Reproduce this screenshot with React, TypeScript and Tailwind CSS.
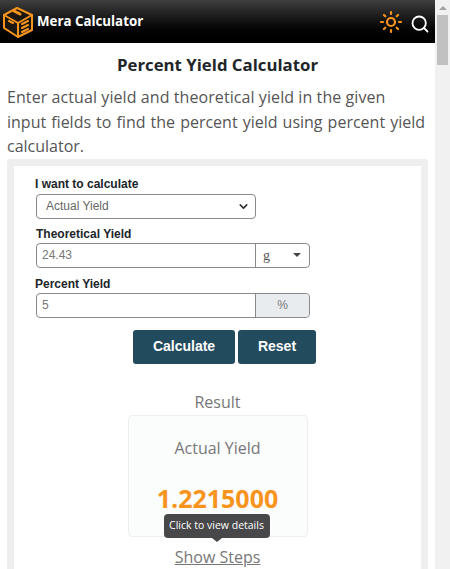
import { ChevronDown, Search, Sun } from "lucide-react"

function Logo() {
    return (
        <svg width="30" height="33" viewBox="3 5 30 33" fill="none" stroke="#f7941d" strokeWidth="2" strokeLinejoin="round" strokeLinecap="round">
            <path d="M17 8 L32 15 V30 L18 37 L4 28 V15 Z" fill="#1c1710" />
            <path d="M4 15 L18 23 L32 15 M18 23 V37" />
            <path d="M14 11 L20 14" strokeWidth="3" />
            <path d="M9 21 L13 23" />
            <path d="M22 24 L28 21 M22 28 L28 25 M22 32 L28 29" />
        </svg>
    )
}

export default function App() {
    const labelClasses = "text-xs font-bold leading-[14px] text-[#212529] font-['Liberation_Sans',sans-serif]"

    return (
        <div className="flex h-[569px] w-[450px] overflow-hidden bg-white font-['Open_Sans',sans-serif]">
            <div className="w-[435px] shrink-0">
                <header className="flex h-[43px] items-center bg-gradient-to-b from-[#3f3f3f] to-black pl-[3px] pr-[5px]">
                    <Logo />
                    <span className="ml-[4px] text-[13.3px] font-bold text-white">Mera Calculator</span>
                    <Sun className="ml-auto text-[#f7941d]" size={24} strokeWidth={2.2} />
                    <Search className="mt-[4px] ml-[7px] text-white" size={20} strokeWidth={2.2} />
                </header>

                <h1 className="mt-[10px] text-center text-[16.8px] leading-[24px] font-bold text-[#212529]">Percent Yield Calculator</h1>
                <p className="mt-[8px] px-[7px] text-[16px] leading-[24.5px] text-[#555]">
                    <span className="block tracking-[0.08px]">Enter actual yield and theoretical yield in the given</span>
                    <span className="block pr-[3px] text-justify [text-align-last:justify]">input fields to find the percent yield using percent yield</span>
                    <span className="block">calculator.</span>
                </p>

                <section className="mx-[7px] h-[420px] rounded-t-[4px] border-x-[7px] border-t-[7px] border-[#eeeeee] bg-white">
                    <div className="ml-[21px] flex w-[275px] flex-col pt-[11px] font-['Liberation_Sans',sans-serif]">
                        <label className={labelClasses}>I want to calculate</label>
                        <div className="ml-[1px] mt-[3px] flex h-[25px] w-[220px] items-center justify-between rounded-[4px] border border-[#8a8a8a] pl-[9px] pr-[5px] text-[12px] text-[#666]">
                            <span>Actual Yield</span>
                            <ChevronDown size={13} strokeWidth={3} className="text-[#333]" />
                        </div>
                        <label className={`mt-[8px] ml-[1px] ${labelClasses}`}>Theoretical Yield</label>
                        <div className="ml-[1px] mt-[2px] flex h-[25px] items-stretch rounded-[4px] border border-[#8a8a8a] text-[12px] text-[#777]">
                            <div className="flex flex-1 items-center pl-[5px]">24.43</div>
                            <div className="flex w-[54px] items-center justify-between border-l border-[#8a8a8a] pl-[7px] pr-[8px]">
                                <span className="font-['Liberation_Serif',serif] text-[14px] text-[#555]">g</span>
                                <span className="h-0 w-0 border-x-[4px] border-t-[4px] border-x-transparent border-t-[#444]" />
                            </div>
                        </div>
                        <label className={`mt-[9px] ${labelClasses}`}>Percent Yield</label>
                        <div className="ml-[1px] mt-[2px] flex h-[25px] items-stretch rounded-[4px] border border-[#8a8a8a] text-[12px] text-[#777]">
                            <div className="flex flex-1 items-center pl-[5px]">5</div>
                            <div className="flex w-[54px] items-center justify-center rounded-r-[4px] border-l border-[#8a8a8a] bg-[#e9ecef]">%</div>
                        </div>
                        <div className="mt-[12px] flex gap-[3px] pl-[98px]">
                            <button className="h-[34px] w-[102px] shrink-0 rounded-[3px] bg-[#234b5e] text-[14px] font-bold text-white">Calculate</button>
                            <button className="h-[34px] w-[78px] shrink-0 rounded-[3px] bg-[#234b5e] text-[14px] font-bold text-white">Reset</button>
                        </div>
                    </div>

                    <div className="mt-[27px] flex flex-col items-center">
                        <div className="text-[16px] leading-[22px] text-[#777]">Result</div>
                        <div className="relative mt-[2px] flex h-[122px] w-[180px] flex-col items-center rounded-[4px] border border-[#eeeeee] bg-[#fbfcfc]">
                            <div className="mt-[21px] text-[16px] leading-[22px] text-[#777]">Actual Yield</div>
                            <div className="mt-[23px] text-[25px] leading-[32px] font-bold text-[#f7941d]">1.2215000</div>
                            <div className="absolute top-[98px] left-[35px] flex h-[24px] w-[106px] items-center justify-center rounded-[4px] bg-[#48484a] text-[10.5px] whitespace-nowrap text-white">
                                Click to view details
                                <span className="absolute -bottom-[4px] left-1/2 h-0 w-0 -translate-x-1/2 border-x-[5px] border-t-[4px] border-x-transparent border-t-[#48484a]" />
                            </div>
                        </div>
                        <a className="mt-[9px] text-[16px] leading-[22px] text-[#777] underline">Show Steps</a>
                    </div>
                </section>
            </div>

            <div className="ml-auto flex w-[15px] flex-col items-center bg-[#f1f1f1]">
                <span className="mt-[6px] h-0 w-0 border-x-[4px] border-b-[4px] border-x-transparent border-b-[#a3a3a3]" />
                <div className="mt-[5px] h-[50px] w-[11px] bg-[#c1c1c1]" />
            </div>
        </div>
    )
}
